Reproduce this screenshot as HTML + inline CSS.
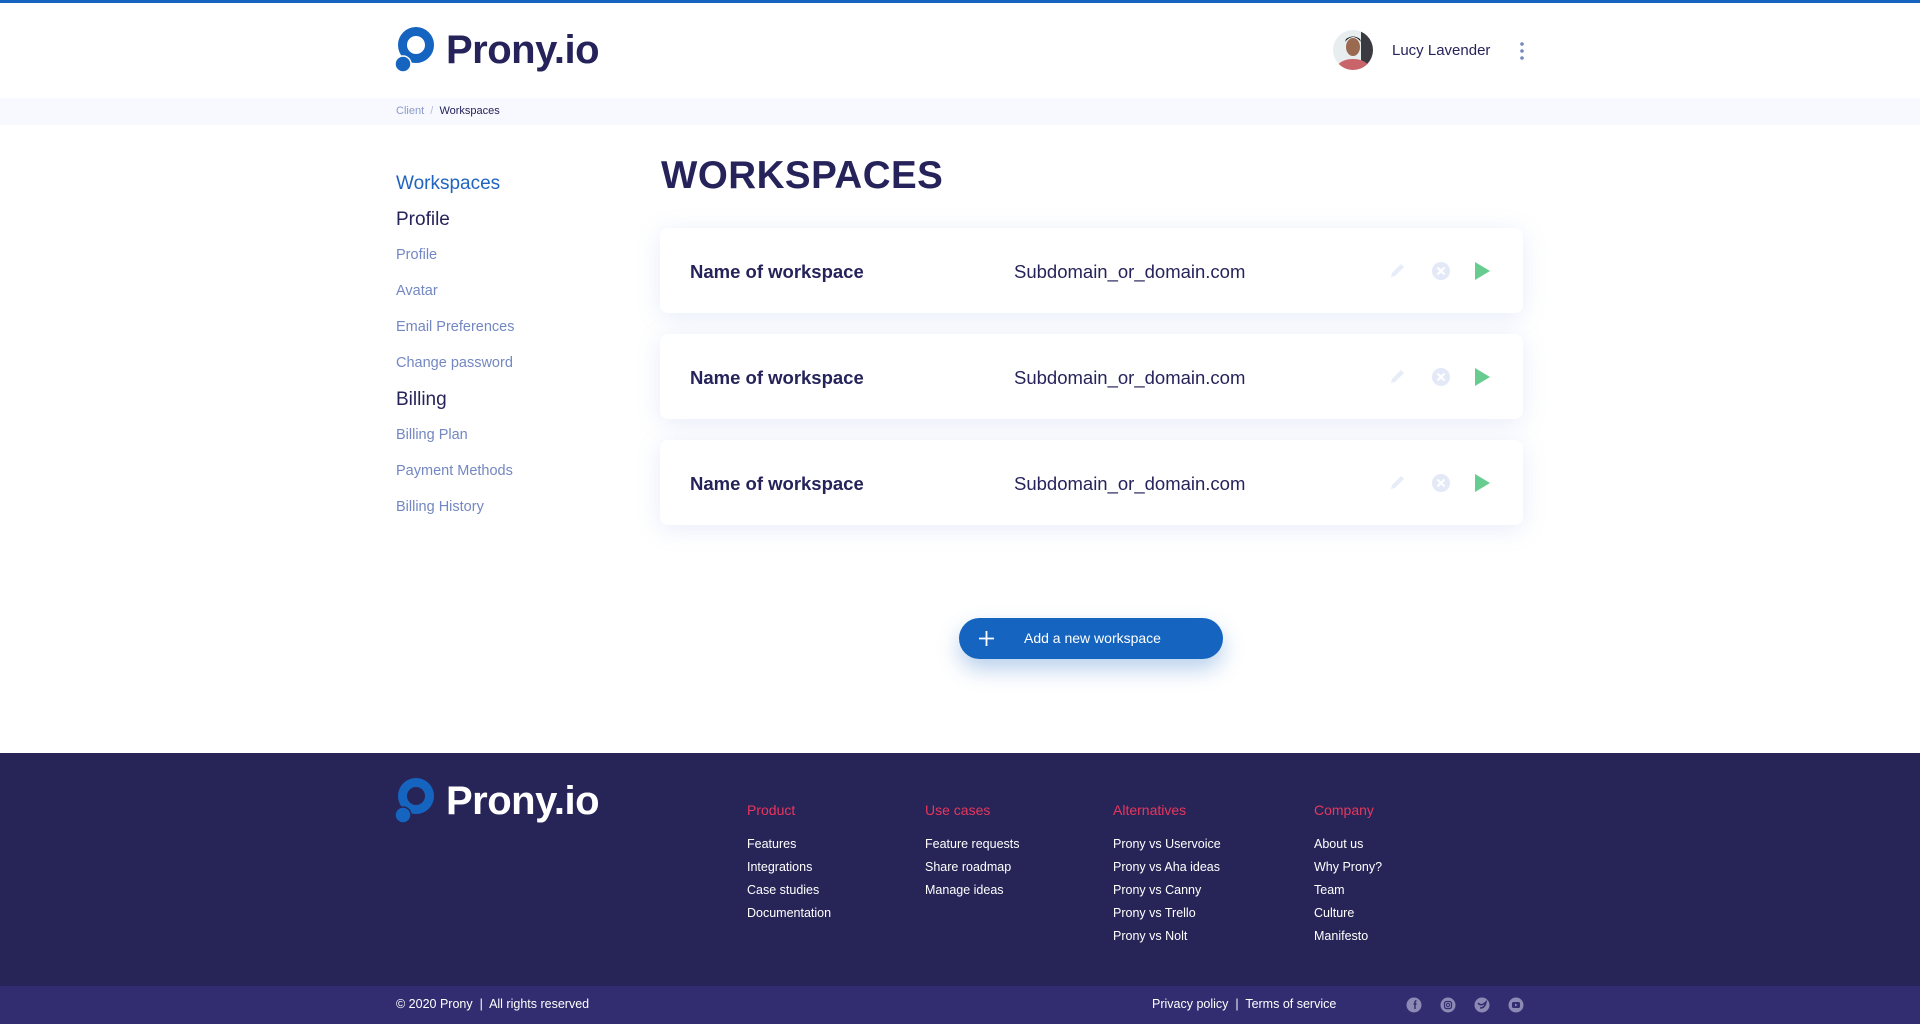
<!DOCTYPE html>
<html><head><meta charset="utf-8"><style>
*{margin:0;padding:0;box-sizing:border-box}
body{width:1920px;height:1024px;overflow:hidden;font-family:"Liberation Sans",sans-serif;background:#fff;position:relative;color:#25235a}
.a{position:absolute;white-space:nowrap}
.topbar{left:0;top:0;width:1920px;height:3px;background:#1565c0}
.crumb{left:0;top:98px;width:1920px;height:27px;background:#f7f9fe}
.logo{display:flex;align-items:center}
.logo span{font-weight:bold;font-size:40px;letter-spacing:-0.5px;margin-left:11px}
.side{font-size:14.5px;color:#7387c2}
.card{left:660px;width:863px;height:85px;background:#fff;border-radius:8px;box-shadow:0 4px 24px rgba(120,150,220,0.18)}
.card .n{position:absolute;left:30px;top:33px;font-size:18.5px;font-weight:bold;color:#25235a}
.card .d{position:absolute;left:354px;top:33px;font-size:18.5px;color:#25235a}
.card svg{position:absolute}
.foot{left:0;top:753px;width:1920px;height:233px;background:#272557}
.bot{left:0;top:986px;width:1920px;height:38px;background:#312d70}
.fh{font-size:14px;color:#e8365d}
.fl{font-size:12.5px;color:#fff;line-height:23px}
</style></head><body>
<div class="a topbar"></div>
<div class="a logo" style="left:395px;top:27px">
<svg width="40" height="46" viewBox="0 0 40 46"><circle cx="21" cy="18" r="13.5" fill="none" stroke="#1565c0" stroke-width="9"/><circle cx="8" cy="37" r="8" fill="#1565c0"/><circle cx="8" cy="37" r="8" fill="none" stroke="#fff" stroke-width="1.5"/></svg>
<span style="color:#25235a">Prony.io</span></div>
<svg class="a" style="left:1333px;top:30px" width="40" height="40"><defs><clipPath id="c"><circle cx="20" cy="20" r="20"/></clipPath></defs><g clip-path="url(#c)"><rect width="40" height="40" fill="#e8eef0"/><rect x="28" y="0" width="12" height="40" fill="#3a3a40"/><ellipse cx="20" cy="38" rx="16" ry="9" fill="#c9646a"/><ellipse cx="20" cy="17" rx="7" ry="9" fill="#9a6a50"/><path d="M12 12 Q20 2 28 12 L27 9 Q20 4 13 9Z" fill="#1e1a1a"/></g></svg>
<div class="a" style="left:1392px;top:42px;font-size:15px;color:#25235a">Lucy Lavender</div>
<svg class="a" style="left:1518px;top:41px" width="8" height="20"><circle cx="4" cy="3" r="1.8" fill="#7387c2"/><circle cx="4" cy="10" r="1.8" fill="#7387c2"/><circle cx="4" cy="17" r="1.8" fill="#7387c2"/></svg>
<div class="a crumb"></div>
<div class="a" style="left:396px;top:105px;font-size:11px;color:#8a9ac9">Client &nbsp;<span style="color:#b0bbdd">/</span>&nbsp; <span style="color:#25235a">Workspaces</span></div>

<div class="a" style="left:396px;top:173px;font-size:19px;color:#1f64c0">Workspaces</div>
<div class="a" style="left:396px;top:209px;font-size:19px;color:#25235a">Profile</div>
<div class="a side" style="left:396px;top:247px">Profile</div>
<div class="a side" style="left:396px;top:283px">Avatar</div>
<div class="a side" style="left:396px;top:319px">Email Preferences</div>
<div class="a side" style="left:396px;top:355px">Change password</div>
<div class="a" style="left:396px;top:389px;font-size:19px;color:#25235a">Billing</div>
<div class="a side" style="left:396px;top:427px">Billing Plan</div>
<div class="a side" style="left:396px;top:463px">Payment Methods</div>
<div class="a side" style="left:396px;top:499px">Billing History</div>

<div class="a" style="left:661px;top:154px;font-size:38.5px;font-weight:bold;color:#25235a;letter-spacing:0.5px">WORKSPACES</div>

<div class="a card" style="top:228px"><div class="n">Name of workspace</div><div class="d">Subdomain_or_domain.com</div>
<svg style="left:728px;top:34px" width="18" height="18"><path d="M3 15 L4 11 L13 2 L16 5 L7 14 Z" fill="#e6ecf8"/></svg>
<svg style="left:771px;top:33px" width="20" height="20"><circle cx="10" cy="10" r="9" fill="#e3e9f6"/><path d="M6.5 6.5L13.5 13.5M13.5 6.5L6.5 13.5" stroke="#fff" stroke-width="2"/></svg>
<svg style="left:814px;top:33px" width="18" height="20"><path d="M1 1L16 10L1 19Z" fill="#66cc8f"/></svg></div>
<div class="a card" style="top:334px"><div class="n">Name of workspace</div><div class="d">Subdomain_or_domain.com</div>
<svg style="left:728px;top:34px" width="18" height="18"><path d="M3 15 L4 11 L13 2 L16 5 L7 14 Z" fill="#e6ecf8"/></svg>
<svg style="left:771px;top:33px" width="20" height="20"><circle cx="10" cy="10" r="9" fill="#e3e9f6"/><path d="M6.5 6.5L13.5 13.5M13.5 6.5L6.5 13.5" stroke="#fff" stroke-width="2"/></svg>
<svg style="left:814px;top:33px" width="18" height="20"><path d="M1 1L16 10L1 19Z" fill="#66cc8f"/></svg></div>
<div class="a card" style="top:440px"><div class="n">Name of workspace</div><div class="d">Subdomain_or_domain.com</div>
<svg style="left:728px;top:34px" width="18" height="18"><path d="M3 15 L4 11 L13 2 L16 5 L7 14 Z" fill="#e6ecf8"/></svg>
<svg style="left:771px;top:33px" width="20" height="20"><circle cx="10" cy="10" r="9" fill="#e3e9f6"/><path d="M6.5 6.5L13.5 13.5M13.5 6.5L6.5 13.5" stroke="#fff" stroke-width="2"/></svg>
<svg style="left:814px;top:33px" width="18" height="20"><path d="M1 1L16 10L1 19Z" fill="#66cc8f"/></svg></div>

<div class="a" style="left:959px;top:618px;width:264px;height:41px;border-radius:21px;background:#1565c0;box-shadow:0 10px 22px rgba(21,101,192,0.3)">
<svg style="position:absolute;left:19px;top:12px" width="17" height="17"><path d="M8.5 1V16M1 8.5H16" stroke="#fff" stroke-width="1.8"/></svg>
<div style="position:absolute;left:65px;top:12px;font-size:14px;color:#fff">Add a new workspace</div></div>

<div class="a foot"></div>
<div class="a logo" style="left:395px;top:778px">
<svg width="40" height="46" viewBox="0 0 40 46"><circle cx="21" cy="18" r="13.5" fill="none" stroke="#1565c0" stroke-width="9"/><circle cx="8" cy="37" r="8" fill="#1565c0"/><circle cx="8" cy="37" r="8" fill="none" stroke="#272557" stroke-width="1.5"/></svg>
<span style="color:#fff">Prony.io</span></div>
<div class="a fh" style="left:747px;top:802px">Product</div>
<div class="a fh" style="left:925px;top:802px">Use cases</div>
<div class="a fh" style="left:1113px;top:802px">Alternatives</div>
<div class="a fh" style="left:1314px;top:802px">Company</div>
<div class="a fl" style="left:747px;top:833px">Features<br>Integrations<br>Case studies<br>Documentation</div>
<div class="a fl" style="left:925px;top:833px">Feature requests<br>Share roadmap<br>Manage ideas</div>
<div class="a fl" style="left:1113px;top:833px">Prony vs Uservoice<br>Prony vs Aha ideas<br>Prony vs Canny<br>Prony vs Trello<br>Prony vs Nolt</div>
<div class="a fl" style="left:1314px;top:833px">About us<br>Why Prony?<br>Team<br>Culture<br>Manifesto</div>
<div class="a bot"></div>
<div class="a" style="left:396px;top:997px;font-size:12.5px;color:#fff">© 2020 Prony &nbsp;|&nbsp; All rights reserved</div>
<div class="a" style="left:1152px;top:997px;font-size:12.5px;color:#fff">Privacy policy &nbsp;|&nbsp; Terms of service</div>
<svg class="a" style="left:1405px;top:996px" width="125" height="18">
<circle cx="9" cy="9" r="7.5" fill="#8c8ab5"/><path d="M10 5H11.5M10 5V13M8.5 8H11.5" stroke="#312d70" stroke-width="1.4"/>
<circle cx="43" cy="9" r="7.5" fill="#8c8ab5"/><rect x="39.5" y="5.5" width="7" height="7" rx="2" fill="none" stroke="#312d70" stroke-width="1.2"/><circle cx="43" cy="9" r="1.6" fill="none" stroke="#312d70" stroke-width="1"/>
<circle cx="77" cy="9" r="7.5" fill="#8c8ab5"/><path d="M73 7Q76 11 81 6Q80 12 75 12" fill="none" stroke="#312d70" stroke-width="1.5"/>
<circle cx="111" cy="9" r="7.5" fill="#8c8ab5"/><rect x="107" y="6" width="8" height="6" rx="1.5" fill="#312d70"/><path d="M110 7.5L112.5 9L110 10.5Z" fill="#8c8ab5"/>
</svg>
</body></html>
